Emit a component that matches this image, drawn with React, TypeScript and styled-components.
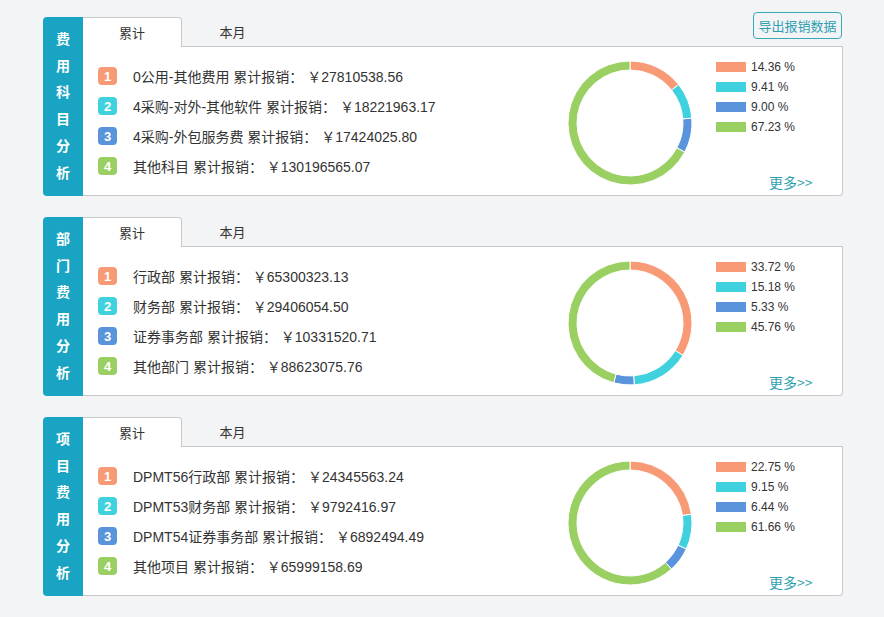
import React from "react";
import styled, { createGlobalStyle } from "styled-components";

const GlobalStyle = createGlobalStyle`
  html, body { margin: 0; padding: 0; background: #f3f4f6; }
  body {
    font-family: "Liberation Sans", Arial, "Noto Sans CJK SC", sans-serif;
    color: #333;
  }
`;

const COLORS = ["#f99a77", "#3fd2de", "#5a94dd", "#9acf62"];

const Page = styled.div`
  padding: 17px 0 0 43px;
  width: 800px;
  display: flex;
  flex-direction: column;
  gap: 21px;
`;

const Panel = styled.section`
  display: flex;
  height: 179px;
`;

const Side = styled.div`
  width: 40px;
  flex: none;
  background: #1aa4c4;
  border-radius: 4px 0 0 4px;
  color: #fff;
  font-weight: bold;
  font-size: 14px;
  line-height: 26.7px;
  text-align: center;
  padding-top: 8px;
  box-sizing: border-box;
  font-family: "Noto Sans CJK SC", sans-serif;
`;

const Main = styled.div`
  flex: 1;
  display: flex;
  flex-direction: column;
`;

const TabRow = styled.div`
  height: 29px;
  display: flex;
  align-items: flex-start;
`;

const Tab = styled.div<{ $active?: boolean }>`
  width: ${(p) => (p.$active ? "99px" : "101px")};
  height: 30px;
  box-sizing: border-box;
  font-size: 13px;
  text-align: center;
  color: #333;
  font-family: "Noto Sans CJK SC", sans-serif;
  background: ${(p) => (p.$active ? "#fff" : "transparent")};
  border: ${(p) => (p.$active ? "1px solid #c9c9c9" : "none")};
  border-left: none;
  border-bottom: none;
  border-radius: 0 4px 0 0;
  position: relative;
  z-index: 1;
  line-height: ${(p) => (p.$active ? "29px" : "30px")};
`;

const ExportButton = styled.button`
  margin-left: auto;
  margin-top: -5px;
  margin-right: 1px;
  height: 27px;
  width: 89px;
  padding: 0;
  background: transparent;
  border: 1px solid #3aa8b6;
  border-radius: 4px;
  color: #2f9fb0;
  font-size: 13px;
  font-family: "Noto Sans CJK SC", sans-serif;
`;

const Content = styled.div`
  height: 150px;
  box-sizing: border-box;
  background: #fff;
  border: 1px solid #c9c9c9;
  border-left: none;
  border-radius: 0 0 4px 0;
  display: flex;
  padding: 14px 0 0 15px;
`;

const List = styled.div`
  flex: 1;
  display: flex;
  flex-direction: column;
`;

const Row = styled.div`
  height: 30px;
  display: flex;
  align-items: center;
  gap: 16px;
  font-size: 14px;
  color: #333;
  white-space: nowrap;
`;

const Badge = styled.span<{ $color: string }>`
  width: 19px;
  height: 18px;
  border-radius: 4px;
  background: ${(p) => p.$color};
  color: #fff;
  font-weight: bold;
  font-size: 13px;
  display: flex;
  align-items: center;
  justify-content: center;
`;

const ChartBox = styled.div`
  width: 124px;
  height: 124px;
  margin-top: 0;
  margin-right: 24px;
  flex: none;
`;

const LegendCol = styled.div`
  width: 126px;
  flex: none;
  display: flex;
  flex-direction: column;
  justify-content: space-between;
  padding-bottom: 4px;
  margin-top: -4px;
`;

const Legend = styled.div`
  display: flex;
  flex-direction: column;
`;

const LegendItem = styled.div`
  height: 20px;
  display: flex;
  align-items: center;
  gap: 5px;
  font-size: 12px;
  color: #333;
`;

const Swatch = styled.span<{ $color: string }>`
  width: 30px;
  height: 10px;
  background: ${(p) => p.$color};
`;

const More = styled.a`
  align-self: flex-start;
  margin-left: 53px;
  font-size: 14px;
  line-height: 18px;
  color: #2f9fb0;
  text-decoration: none;
  font-family: "Noto Sans CJK SC", sans-serif;
`;

function polar(cx: number, cy: number, r: number, a: number) {
  const rad = ((a - 90) * Math.PI) / 180;
  return [cx + r * Math.cos(rad), cy + r * Math.sin(rad)];
}

function Donut({ values }: { values: number[] }) {
  const cx = 62, cy = 62, ro = 62, ri = 53;
  let start = 0;
  const total = values.reduce((a, b) => a + b, 0);
  return (
    <svg width="124" height="124" viewBox="0 0 124 124">
      {values.map((v, i) => {
        const sweep = (v / total) * 360;
        const end = start + sweep;
        const large = sweep > 180 ? 1 : 0;
        const [x1, y1] = polar(cx, cy, ro, start);
        const [x2, y2] = polar(cx, cy, ro, end);
        const [x3, y3] = polar(cx, cy, ri, end);
        const [x4, y4] = polar(cx, cy, ri, start);
        const d = `M${x1} ${y1} A${ro} ${ro} 0 ${large} 1 ${x2} ${y2} L${x3} ${y3} A${ri} ${ri} 0 ${large} 0 ${x4} ${y4} Z`;
        start = end;
        return <path key={i} d={d} fill={COLORS[i]} stroke="#fff" strokeWidth="1" />;
      })}
    </svg>
  );
}

type PanelData = {
  title: string;
  items: { name: string; amount: string }[];
  pcts: number[];
  exportBtn?: boolean;
};

const panels: PanelData[] = [
  {
    title: "费用科目分析",
    exportBtn: true,
    items: [
      { name: "0公用-其他费用", amount: "27810538.56" },
      { name: "4采购-对外-其他软件", amount: "18221963.17" },
      { name: "4采购-外包服务费", amount: "17424025.80" },
      { name: "其他科目", amount: "130196565.07" },
    ],
    pcts: [14.36, 9.41, 9.0, 67.23],
  },
  {
    title: "部门费用分析",
    items: [
      { name: "行政部", amount: "65300323.13" },
      { name: "财务部", amount: "29406054.50" },
      { name: "证券事务部", amount: "10331520.71" },
      { name: "其他部门", amount: "88623075.76" },
    ],
    pcts: [33.72, 15.18, 5.33, 45.76],
  },
  {
    title: "项目费用分析",
    items: [
      { name: "DPMT56行政部", amount: "24345563.24" },
      { name: "DPMT53财务部", amount: "9792416.97" },
      { name: "DPMT54证券事务部", amount: "6892494.49" },
      { name: "其他项目", amount: "65999158.69" },
    ],
    pcts: [22.75, 9.15, 6.44, 61.66],
  },
];

export default function App() {
  return (
    <>
      <GlobalStyle />
      <Page>
        {panels.map((p) => (
          <Panel key={p.title}>
            <Side>
              {p.title.split("").map((c, i) => (
                <div key={i}>{c}</div>
              ))}
            </Side>
            <Main>
              <TabRow>
                <Tab $active>累计</Tab>
                <Tab>本月</Tab>
                {p.exportBtn && <ExportButton>导出报销数据</ExportButton>}
              </TabRow>
              <Content>
                <List>
                  {p.items.map((it, i) => (
                    <Row key={i}>
                      <Badge $color={COLORS[i]}>{i + 1}</Badge>
                      <span>
                        {it.name} 累计报销： ￥{it.amount}
                      </span>
                    </Row>
                  ))}
                </List>
                <ChartBox>
                  <Donut values={p.pcts} />
                </ChartBox>
                <LegendCol>
                  <Legend>
                    {p.pcts.map((v, i) => (
                      <LegendItem key={i}>
                        <Swatch $color={COLORS[i]} />
                        {v.toFixed(2)} %
                      </LegendItem>
                    ))}
                  </Legend>
                  <More href="#">更多&gt;&gt;</More>
                </LegendCol>
              </Content>
            </Main>
          </Panel>
        ))}
      </Page>
    </>
  );
}
